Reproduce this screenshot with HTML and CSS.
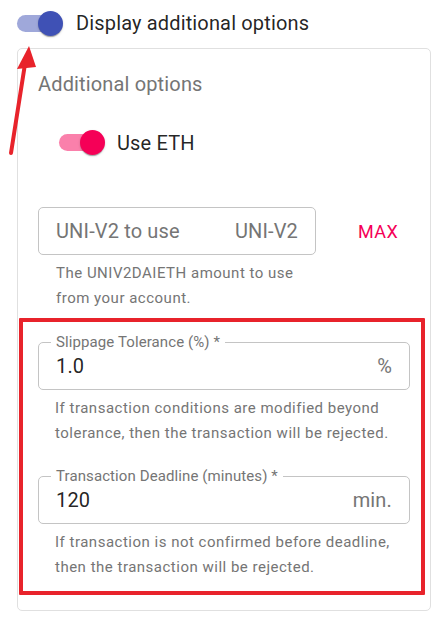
FILE: index.html
```html
<!DOCTYPE html>
<html>
<head>
<meta charset="utf-8">
<link rel="stylesheet" href="styles.css">
</head>
<body>
<div class="top-row">
  <span class="switch switch-primary"><span class="track"></span><span class="thumb"></span></span>
  <span class="top-label">Display additional options</span>
</div>
<div class="card">
  <div class="card-title">Additional options</div>
  <div class="eth-row">
    <span class="switch switch-secondary"><span class="track"></span><span class="thumb"></span></span>
    <span class="eth-label">Use ETH</span>
  </div>
  <div class="amount-row">
    <div class="field field-amount">
      <span class="placeholder">UNI-V2 to use</span>
      <span class="adorn">UNI-V2</span>
    </div>
    <span class="max">MAX</span>
  </div>
  <div class="helper">The UNIV2DAIETH amount to use<br>from your account.</div>
  <div class="highlight">
    <div class="field field-labeled">
      <span class="legend">Slippage Tolerance (%) *</span>
      <span class="value">1.0</span>
      <span class="adorn">%</span>
    </div>
    <div class="helper">If transaction conditions are modified beyond<br>tolerance, then the transaction will be rejected.</div>
    <div class="field field-labeled field-second">
      <span class="legend">Transaction Deadline (minutes) *</span>
      <span class="value">120</span>
      <span class="adorn">min.</span>
    </div>
    <div class="helper">If transaction is not confirmed before deadline,<br>then the transaction will be rejected.</div>
  </div>
</div>
<svg class="arrow" width="50" height="170" viewBox="0 0 50 170">
  <line x1="11" y1="153" x2="25" y2="64" stroke="#e8232b" stroke-width="4" stroke-linecap="round"/>
  <polygon points="29,46 17,69 36,67" fill="#e8232b"/>
</svg>
</body>
</html>
```
FILE: styles.css
```css
* { box-sizing: border-box; }
html, body { margin: 0; padding: 0; background: #fff; }
body {
  font-family: Roboto, "Noto Sans", sans-serif;
  color: rgba(0, 0, 0, 0.87);
  position: relative;
  width: 443px;
  height: 619px;
  overflow: hidden;
}
.top-row {
  height: 48px;
  display: flex;
  align-items: center;
  padding-left: 17px;
  padding-bottom: 2px;
}
.switch {
  position: relative;
  display: inline-block;
  width: 47px;
  height: 25px;
  flex: none;
}
.switch .track {
  position: absolute;
  left: 0;
  top: 4px;
  width: 43px;
  height: 17px;
  border-radius: 9px;
}
.switch .thumb {
  position: absolute;
  left: 21px;
  top: 0;
  width: 25px;
  height: 25px;
  border-radius: 50%;
  box-shadow: 0 2px 1px -1px rgba(0,0,0,0.2), 0 1px 1px 0 rgba(0,0,0,0.14), 0 1px 3px 0 rgba(0,0,0,0.12);
}
.switch-primary .track { background: #9fa8da; }
.switch-primary .thumb { background: #3f51b5; }
.switch-secondary .track { background: #fa80ab; }
.switch-secondary .thumb { background: #f50057; }
.top-label {
  margin-left: 12px;
  font-size: 20px;
  line-height: 24px;
  letter-spacing: 0.15px;
}
.card {
  margin: 0 12px 0 17px;
  height: 563px;
  border: 1px solid #e0e0e0;
  border-radius: 5px;
  padding-top: 23px;
}
.card-title {
  margin-left: 20px;
  font-size: 20px;
  line-height: 24px;
  color: #757575;
  letter-spacing: 0.15px;
}
.eth-row {
  display: flex;
  align-items: center;
  margin-top: 34px;
  margin-left: 41px;
  height: 25px;
}
.eth-label {
  margin-left: 11px;
  font-size: 20px;
  line-height: 24px;
  letter-spacing: 0.15px;
}
.amount-row {
  display: flex;
  align-items: center;
  margin-top: 52px;
  margin-left: 20px;
}
.field {
  position: relative;
  height: 48px;
  border: 1px solid #c4c4c4;
  border-radius: 5px;
  display: flex;
  align-items: center;
  justify-content: space-between;
  padding: 0 17px 0 17px;
  font-size: 20px;
  letter-spacing: 0.15px;
}
.field-amount {
  width: 278px;
}
.placeholder { color: #757575; }
.adorn { color: #757575; }
.max {
  margin-left: 42px;
  color: #f50057;
  font-size: 18px;
  letter-spacing: 0.5px;
  font-weight: 400;
}
.helper {
  margin: 6px 0 0 38px;
  font-size: 15px;
  line-height: 25px;
  color: #757575;
  letter-spacing: 0.5px;
}
.highlight {
  margin: 7px 5px 0 1px;
  border: 4px solid #e8232b;
  border-radius: 1px;
  padding: 20px 11px 11px 15px;
}
.highlight .helper {
  margin: 6px 0 0 17px;
}
.field-labeled {
  width: 100%;
}
.field-second {
  margin-top: 30px;
}
.legend {
  position: absolute;
  left: 12px;
  top: -10px;
  padding: 0 5px 0 5px;
  background: #fff;
  font-size: 15px;
  line-height: 18px;
  color: #757575;
  letter-spacing: 0.1px;
}
.value { color: rgba(0, 0, 0, 0.87); }
.arrow {
  position: absolute;
  left: 0;
  top: 0;
}
```
